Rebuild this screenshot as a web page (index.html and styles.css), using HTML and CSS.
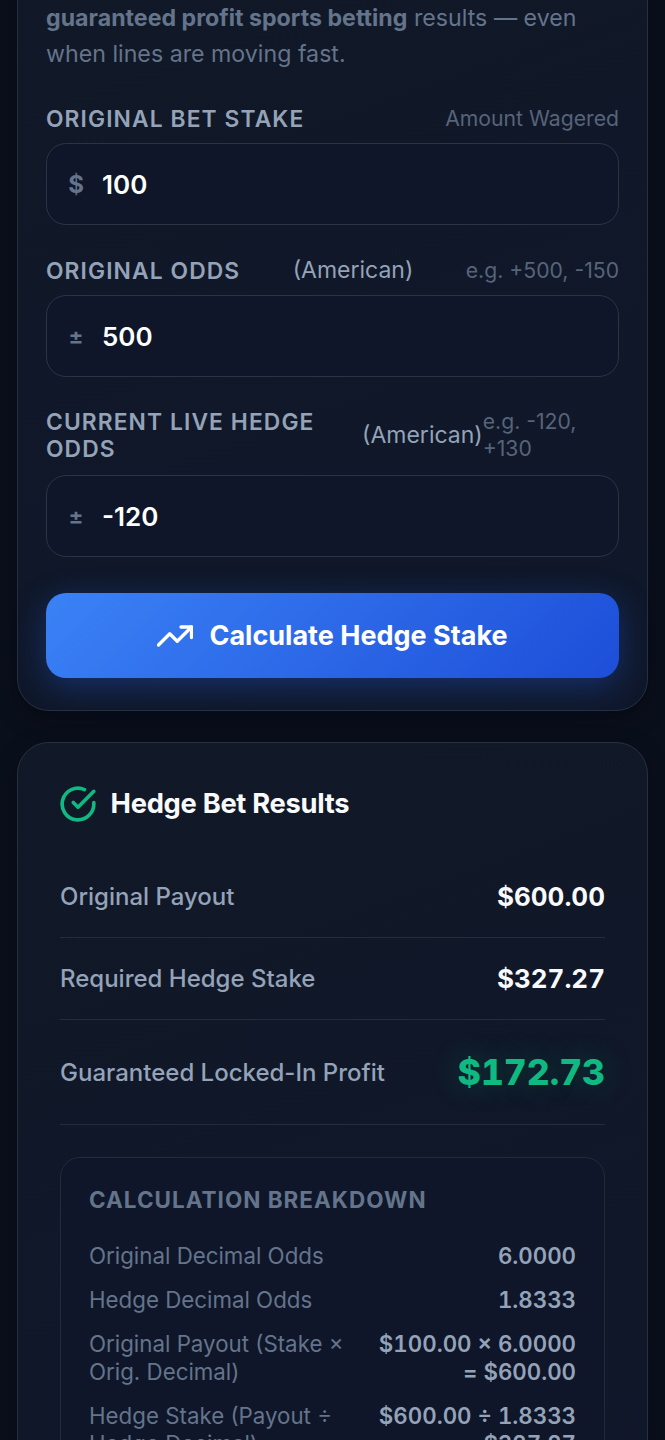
FILE: index.html
```html
<!DOCTYPE html>
<html lang="en">
<head>
    <meta charset="UTF-8">
    <meta name="viewport" content="width=device-width, initial-scale=1.0">
    <title>Hedge Bet Calculator</title>
    <link rel="stylesheet" href="styles.css">
</head>
<body>
    <main class="page">
        <section class="card calc-card">
            <p class="intro"><strong>guaranteed profit sports betting</strong> results — even when lines are moving fast.</p>

            <div class="field">
                <div class="field-label">
                    <span class="label-name">Original Bet Stake</span>
                    <span class="label-hint">Amount Wagered</span>
                </div>
                <div class="input-box">
                    <span class="input-prefix">$</span>
                    <span class="input-value">100</span>
                </div>
            </div>

            <div class="field">
                <div class="field-label">
                    <span class="label-name">Original Odds</span>
                    <span class="label-unit">(American)</span>
                    <span class="label-hint">e.g. +500, -150</span>
                </div>
                <div class="input-box">
                    <span class="input-prefix small">±</span>
                    <span class="input-value">500</span>
                </div>
            </div>

            <div class="field">
                <div class="field-label wrapped">
                    <span class="label-name">Current Live Hedge Odds</span>
                    <span class="label-unit">(American)</span>
                    <span class="label-hint">e.g. -120, +130</span>
                </div>
                <div class="input-box">
                    <span class="input-prefix small">±</span>
                    <span class="input-value">-120</span>
                </div>
            </div>

            <button class="calc-btn" type="button">
                <svg class="btn-icon" viewBox="0 0 24 24" fill="none" stroke="currentColor" stroke-width="2.2" stroke-linecap="round" stroke-linejoin="round">
                    <polyline points="1 18 8.5 10.5 13.5 15.5 23 6"></polyline>
                    <polyline points="16 6 23 6 23 13"></polyline>
                </svg>
                Calculate Hedge Stake
            </button>
        </section>

        <section class="card results-card">
            <h2 class="results-title">
                <svg class="check-icon" viewBox="0 0 24 24" fill="none" stroke="currentColor" stroke-width="2.3" stroke-linecap="round" stroke-linejoin="round">
                    <path d="M22 11.1V12a10 10 0 1 1-5.9-9.1"></path>
                    <polyline points="22 4 12 14 9 11"></polyline>
                </svg>
                Hedge Bet Results
            </h2>

            <div class="result-row">
                <span class="result-name">Original Payout</span>
                <span class="result-value">$600.00</span>
            </div>
            <div class="result-row">
                <span class="result-name">Required Hedge Stake</span>
                <span class="result-value">$327.27</span>
            </div>
            <div class="result-row profit-row">
                <span class="result-name">Guaranteed Locked-In Profit</span>
                <span class="result-value profit">$172.73</span>
            </div>

            <div class="breakdown">
                <h3 class="breakdown-title">Calculation Breakdown</h3>
                <div class="breakdown-row">
                    <span>Original Decimal Odds</span>
                    <span class="breakdown-value">6.0000</span>
                </div>
                <div class="breakdown-row">
                    <span>Hedge Decimal Odds</span>
                    <span class="breakdown-value">1.8333</span>
                </div>
                <div class="breakdown-row">
                    <span>Original Payout (Stake × Orig. Decimal)</span>
                    <span class="breakdown-value">$100.00 × 6.0000 = $600.00</span>
                </div>
                <div class="breakdown-row">
                    <span>Hedge Stake (Payout ÷ Hedge Decimal)</span>
                    <span class="breakdown-value">$600.00 ÷ 1.8333 = $327.27</span>
                </div>
            </div>
        </section>
    </main>
</body>
</html>
```
FILE: styles.css
```css
html, body {
    height: 1440px;
    overflow: hidden;
}

body {
    margin: 0;
    font-family: 'Inter', 'Liberation Sans', sans-serif;
    background: #0a0f1c;
    color: #f8fafc;
}

.page {
    display: flex;
    flex-direction: column;
    gap: 31px;
    margin-top: -41px;
    padding: 0 17px;
}

.card {
    border: 1.5px solid #283040;
    border-radius: 32px;
    background: linear-gradient(160deg, #111827, #0f172a);
    box-shadow: 0 8px 24px rgba(0, 0, 0, 0.3);
}

.calc-card {
    padding: 40px 28px 32px;
}

.intro {
    margin: 0 0 33px;
    font-size: 23.2px;
    line-height: 36px;
    color: #64748b;
}

.intro strong {
    font-weight: 700;
}

.field {
    margin-bottom: 31px;
}

.field-label {
    display: flex;
    align-items: center;
    justify-content: space-between;
    margin-bottom: 11px;
    min-height: 27px;
}

.field-label.wrapped {
    margin-bottom: 13px;
}

.label-name {
    font-size: 22.8px;
    line-height: 27px;
    font-weight: 600;
    letter-spacing: 1.1px;
    text-transform: uppercase;
    color: #94a3b8;
}

.label-unit {
    font-size: 23px;
    color: #94a3b8;
}

.label-hint {
    font-size: 21.2px;
    line-height: 27px;
    color: #56647a;
}

.input-box {
    display: flex;
    align-items: center;
    gap: 17px;
    height: 80px;
    padding: 0 20px;
    border: 1.5px solid #2b3444;
    border-radius: 20px;
    background: #0f1629;
}

.input-prefix {
    width: 18px;
    font-size: 24px;
    font-weight: 700;
    text-align: center;
    color: #64748b;
}

.input-prefix.small {
    font-size: 22px;
}

.input-value {
    font-size: 26px;
    font-weight: 600;
    color: #fff;
}

.calc-btn {
    display: flex;
    align-items: center;
    justify-content: center;
    gap: 16px;
    width: 100%;
    height: 85px;
    margin-top: 36px;
    border: 0;
    border-radius: 20px;
    font-family: inherit;
    font-size: 27px;
    font-weight: 700;
    color: #fff;
    background: linear-gradient(135deg, #3b82f6, #1d4ed8);
    box-shadow: 0 8px 32px rgba(37, 99, 235, 0.35);
}

.btn-icon {
    width: 36px;
    height: 36px;
}

.results-card {
    padding: 36px 42px 40px;
}

.results-title {
    display: flex;
    align-items: center;
    gap: 13.6px;
    margin: 0 0 27px;
    font-size: 27.3px;
    line-height: 50px;
    font-weight: 700;
    letter-spacing: -0.3px;
    color: #f8fafc;
}

.check-icon {
    width: 38px;
    height: 38px;
    margin-left: -1px;
    color: #10b981;
}

.result-row {
    display: flex;
    align-items: center;
    justify-content: space-between;
    height: 81px;
    border-bottom: 1.5px solid #242d3c;
}

.result-name {
    font-size: 24px;
    font-weight: 500;
    color: #94a3b8;
}

.result-value {
    font-size: 26px;
    font-weight: 700;
    font-variant-numeric: tabular-nums;
    color: #f8fafc;
}

.profit-row {
    height: 104px;
}

.profit {
    font-size: 35.5px;
    font-weight: 800;
    color: #10b981;
    text-shadow: 0 0 30px rgba(16, 185, 129, 0.3);
}

.breakdown {
    margin-top: 32px;
    padding: 28px;
    border: 1.5px solid #222b3a;
    border-radius: 20px;
    background: #0f1629;
}

.breakdown-title {
    margin: 0 0 28px;
    font-size: 22.5px;
    line-height: 28px;
    font-weight: 700;
    letter-spacing: 1px;
    text-transform: uppercase;
    color: #64748b;
}

.breakdown-row {
    display: flex;
    justify-content: space-between;
    gap: 30px;
    margin-bottom: 16px;
    font-size: 22.3px;
    line-height: 28px;
    color: #64748b;
}

.breakdown-value {
    flex-shrink: 0;
    max-width: 198px;
    font-weight: 600;
    font-variant-numeric: tabular-nums;
    text-align: right;
    color: #94a3b8;
}
```
